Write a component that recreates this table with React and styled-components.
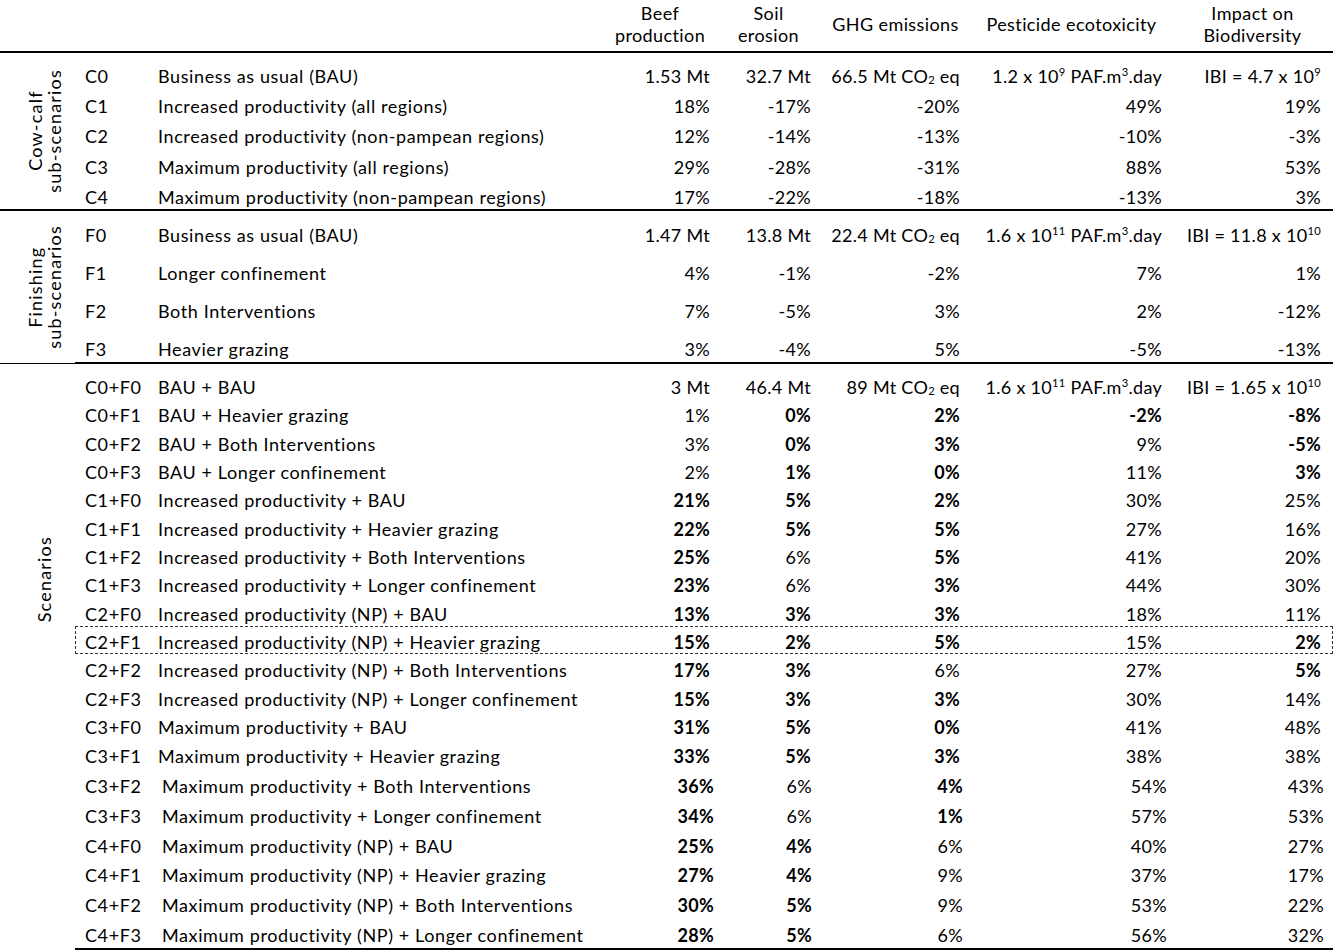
import React from "react";
import styled, { createGlobalStyle, css } from "styled-components";

const GlobalStyle = createGlobalStyle`
  html, body {
    margin: 0;
    padding: 0;
    background: #fff;
  }
  body {
    font-family: Lato, "Open Sans", sans-serif;
    color: #000;
  }
`;

const Sup = styled.sup`
  font-size: 0.62em;
  line-height: 0;
  vertical-align: 0.65em;
`;

const Sub = styled.sub`
  font-size: 0.62em;
  line-height: 0;
  vertical-align: -0.12em;
`;

const co2 = (n) => (
  <>
    {n} Mt CO<Sub>2</Sub> eq
  </>
);
const paf = (a, e) => (
  <>
    {a} x 10<Sup>{e}</Sup> PAF.m<Sup>3</Sup>.day
  </>
);
const ibi = (a, e) => (
  <>
    IBI = {a} x 10<Sup>{e}</Sup>
  </>
);

const cowCalf = [
  ["C0", "Business as usual (BAU)", ["1.53 Mt", "32.7 Mt", co2("66.5"), paf("1.2", 9), ibi("4.7", 9)]],
  ["C1", "Increased productivity (all regions)", ["18%", "-17%", "-20%", "49%", "19%"]],
  ["C2", "Increased productivity (non-pampean regions)", ["12%", "-14%", "-13%", "-10%", "-3%"]],
  ["C3", "Maximum productivity (all regions)", ["29%", "-28%", "-31%", "88%", "53%"]],
  ["C4", "Maximum productivity (non-pampean regions)", ["17%", "-22%", "-18%", "-13%", "3%"]],
];

const finishing = [
  ["F0", "Business as usual (BAU)", ["1.47 Mt", "13.8 Mt", co2("22.4"), paf("1.6", 11), ibi("11.8", 10)]],
  ["F1", "Longer confinement", ["4%", "-1%", "-2%", "7%", "1%"]],
  ["F2", "Both Interventions", ["7%", "-5%", "3%", "2%", "-12%"]],
  ["F3", "Heavier grazing", ["3%", "-4%", "5%", "-5%", "-13%"]],
];

// "*" marks a bold value
const scenarios = [
  ["C0+F0", "BAU + BAU", ["3 Mt", "46.4 Mt", co2("89"), paf("1.6", 11), ibi("1.65", 10)]],
  ["C0+F1", "BAU + Heavier grazing", ["1%", "*0%", "*2%", "*-2%", "*-8%"]],
  ["C0+F2", "BAU + Both Interventions", ["3%", "*0%", "*3%", "9%", "*-5%"]],
  ["C0+F3", "BAU + Longer confinement", ["2%", "*1%", "*0%", "11%", "*3%"]],
  ["C1+F0", "Increased productivity + BAU", ["*21%", "*5%", "*2%", "30%", "25%"]],
  ["C1+F1", "Increased productivity + Heavier grazing", ["*22%", "*5%", "*5%", "27%", "16%"]],
  ["C1+F2", "Increased productivity + Both Interventions", ["*25%", "6%", "*5%", "41%", "20%"]],
  ["C1+F3", "Increased productivity + Longer confinement", ["*23%", "6%", "*3%", "44%", "30%"]],
  ["C2+F0", "Increased productivity (NP) + BAU", ["*13%", "*3%", "*3%", "18%", "11%"]],
  ["C2+F1", "Increased productivity (NP) + Heavier grazing", ["*15%", "*2%", "*5%", "15%", "*2%"], { boxed: true }],
  ["C2+F2", "Increased productivity (NP) + Both Interventions", ["*17%", "*3%", "6%", "27%", "*5%"]],
  ["C2+F3", "Increased productivity (NP) + Longer confinement", ["*15%", "*3%", "*3%", "30%", "14%"]],
  ["C3+F0", "Maximum productivity + BAU", ["*31%", "*5%", "*0%", "41%", "48%"]],
  ["C3+F1", "Maximum productivity + Heavier grazing", ["*33%", "*5%", "*3%", "38%", "38%"], { tall: true }],
  ["C3+F2", "Maximum productivity + Both Interventions", ["*36%", "6%", "*4%", "54%", "43%"], { tall: true, wide: true }],
  ["C3+F3", "Maximum productivity + Longer confinement", ["*34%", "6%", "*1%", "57%", "53%"], { tall: true, wide: true }],
  ["C4+F0", "Maximum productivity (NP) + BAU", ["*25%", "*4%", "6%", "40%", "27%"], { tall: true, wide: true }],
  ["C4+F1", "Maximum productivity (NP) + Heavier grazing", ["*27%", "*4%", "9%", "37%", "17%"], { tall: true, wide: true }],
  ["C4+F2", "Maximum productivity (NP) + Both Interventions", ["*30%", "*5%", "9%", "53%", "22%"], { tall: true, wide: true }],
  ["C4+F3", "Maximum productivity (NP) + Longer confinement", ["*28%", "*5%", "6%", "56%", "32%"], { tall: true, wide: true }],
];

const Table = styled.div`
  width: 1333px;
  font-size: 18px;
  letter-spacing: 0.6px;
  line-height: 20px;
`;

const Header = styled.div`
  display: grid;
  grid-template-columns: 158px 452px 100px 101px 149px 202px 159px 12px;
  height: 51px;
  border-bottom: 2px solid #000;
`;

const HeadCell = styled.div`
  grid-column: ${(p) => p.$col};
  display: flex;
  align-items: center;
  justify-content: center;
  text-align: center;
  line-height: 22px;
  letter-spacing: 0.4px;
  padding: 0 0 4px ${(p) => p.$shift || 0}px;
  white-space: nowrap;
`;

const Section = styled.div`
  display: flex;
`;

const GroupLabel = styled.div`
  width: 75px;
  flex: none;
  box-sizing: border-box;
  display: flex;
  justify-content: center;
  align-items: ${(p) => (p.$top ? "flex-start" : "center")};
  padding: ${(p) => p.$top || 0}px 0 0 14px;
  border-bottom: ${(p) => p.$rule || "none"};
`;

const VerticalText = styled.div`
  writing-mode: vertical-rl;
  transform: rotate(180deg);
  text-align: center;
  line-height: 19px;
  letter-spacing: 1.2px;
  white-space: nowrap;
`;

const Rows = styled.div`
  flex: 1;
  padding-top: ${(p) => p.$pad}px;
  border-bottom: 2px solid #000;
`;

const Row = styled.div`
  display: grid;
  grid-template-columns: ${(p) =>
    p.$wide ? "87px 452px 100px 98px 151px 204px 157px" : "83px 452px 100px 101px 149px 202px 159px"};
  align-items: center;
  box-sizing: border-box;
  height: ${(p) => p.$h}px;
  padding-top: ${(p) => p.$shift}px;
  white-space: nowrap;
  ${(p) =>
    p.$boxed &&
    css`
      outline: 1px dashed #333;
      outline-offset: -1px;
    `}
`;

const Code = styled.div`
  padding-left: 10px;
`;

const Desc = styled.div``;

const Num = styled.div`
  text-align: right;
  letter-spacing: 0.3px;
  font-weight: ${(p) => (p.$bold ? 700 : 400)};
`;

const Value = ({ v }) => {
  if (typeof v === "string" && v.startsWith("*")) return <Num $bold>{v.slice(1)}</Num>;
  return <Num>{v}</Num>;
};

const DataRow = ({ row, h, shift }) => {
  const [code, desc, vals, opt = {}] = row;
  return (
    <Row $h={opt.tall ? 29.86 : h} $shift={shift} $wide={opt.wide} $boxed={opt.boxed}>
      <Code>{code}</Code>
      <Desc>{desc}</Desc>
      {vals.map((v, i) => (
        <Value key={i} v={v} />
      ))}
    </Row>
  );
};

export default function App() {
  return (
    <>
      <GlobalStyle />
      <Table>
        <Header>
          <HeadCell $col={3}>
            Beef
            <br />
            production
          </HeadCell>
          <HeadCell $col={4} $shift={16}>
            Soil
            <br />
            erosion
          </HeadCell>
          <HeadCell $col={5} $shift={20}>
            GHG emissions
          </HeadCell>
          <HeadCell $col={6} $shift={21}>
            Pesticide ecotoxicity
          </HeadCell>
          <HeadCell $col={7} $shift={22}>
            Impact on
            <br />
            Biodiversity
          </HeadCell>
        </Header>

        <Section>
          <GroupLabel $rule="2px solid #000">
            <VerticalText>
              Cow-calf
              <br />
              sub-scenarios
            </VerticalText>
          </GroupLabel>
          <Rows $pad={4.5}>
            {cowCalf.map((r) => (
              <DataRow key={r[0]} row={r} h={30.3} shift={6.5} />
            ))}
          </Rows>
        </Section>

        <Section>
          <GroupLabel $rule="1px solid #000">
            <VerticalText>
              Finishing
              <br />
              sub-scenarios
            </VerticalText>
          </GroupLabel>
          <Rows $pad={0}>
            {finishing.map((r) => (
              <DataRow key={r[0]} row={r} h={37.75} shift={11} />
            ))}
          </Rows>
        </Section>

        <Section>
          <GroupLabel $top={172}>
            <VerticalText>Scenarios</VerticalText>
          </GroupLabel>
          <Rows $pad={6.8}>
            {scenarios.map((r) => (
              <DataRow key={r[0]} row={r} h={28.33} shift={4} />
            ))}
          </Rows>
        </Section>
      </Table>
    </>
  );
}
